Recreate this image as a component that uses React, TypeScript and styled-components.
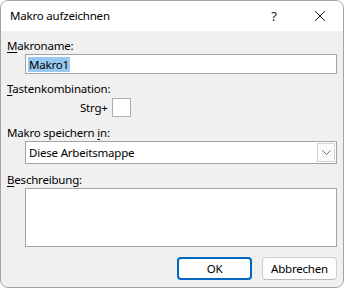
import React from "react";
import styled, { createGlobalStyle } from "styled-components";

const GlobalStyle = createGlobalStyle`
  html, body {
    margin: 0;
    padding: 0;
    background: #ffffff;
  }
  body {
    font-family: "Noto Sans", "Liberation Sans", sans-serif;
    font-size: 11.5px;
    letter-spacing: -0.2px;
    color: #000;
  }
`;

const Window = styled.div`
  width: 344px;
  height: 288px;
  box-sizing: border-box;
  border: 1px solid #a4a4a4;
  border-radius: 8px;
  overflow: hidden;
  display: flex;
  flex-direction: column;
  background: #f0f0f0;
`;

const TitleBar = styled.div`
  height: 30px;
  flex: none;
  background: #ffffff;
  display: flex;
  align-items: center;
  padding-left: 9px;
`;

const Title = styled.div`
  flex: 1;
  font-size: 11.5px;
  line-height: 16px;
`;

const TitleButton = styled.div<{ $w: number }>`
  width: ${(p) => p.$w}px;
  height: 30px;
  display: flex;
  align-items: center;
  justify-content: center;
  font-size: 13px;
  color: #1a1a1a;
`;

const Body = styled.div`
  flex: 1;
  display: flex;
  flex-direction: column;
  padding: 0 6px;
`;

const Label = styled.div<{ $top: number }>`
  margin-top: ${(p) => p.$top}px;
  line-height: 16px;
  white-space: nowrap;
`;

const Key = styled.span`
  text-decoration: underline;
  text-underline-offset: 2px;
`;

const Indented = styled.div`
  margin-left: 18px;
`;

const TextInput = styled.div`
  height: 20px;
  box-sizing: border-box;
  border: 1px solid #a3a3a3;
  background: #fff;
  display: flex;
  align-items: center;
  padding-left: 2px;
`;

const Selected = styled.span`
  background: #99c9ef;
  line-height: 15px;
  padding: 0 1px;
`;

const HotkeyRow = styled.div`
  display: flex;
  align-items: center;
  gap: 4px;
  margin-top: 1px;
  padding-left: 73px;
`;

const SmallBox = styled.div`
  width: 19px;
  height: 19px;
  box-sizing: border-box;
  border: 1px solid #adadad;
  background: #fff;
`;

const Select = styled.div`
  height: 23px;
  box-sizing: border-box;
  border: 1px solid #a3a3a3;
  background: #fff;
  display: flex;
  align-items: center;
  padding: 0 0 0 3px;
`;

const SelectValue = styled.div`
  flex: 1;
`;

const DropButton = styled.div`
  width: 18px;
  height: 19px;
  margin-right: 1px;
  box-sizing: border-box;
  border: 1px solid #d4d4d4;
  background: #fbfbfb;
  display: flex;
  align-items: center;
  justify-content: center;
`;

const TextArea = styled.div`
  height: 59px;
  box-sizing: border-box;
  border: 1px solid #a3a3a3;
  background: #fff;
`;

const Footer = styled.div`
  display: flex;
  justify-content: flex-end;
  gap: 10px;
  margin-top: 10px;
`;

const Button = styled.div<{ $primary?: boolean }>`
  width: 75px;
  height: 23px;
  box-sizing: border-box;
  border-radius: 4px;
  border: ${(p) => (p.$primary ? "2px solid #0067c0" : "1px solid #d0d0d0")};
  border-bottom-color: ${(p) => (p.$primary ? "#0067c0" : "#b8b8b8")};
  background: #fdfdfd;
  display: flex;
  align-items: center;
  justify-content: center;
  line-height: 16px;
`;

export default function App() {
  return (
    <>
      <GlobalStyle />
      <Window>
        <TitleBar>
          <Title>Makro aufzeichnen</Title>
          <TitleButton $w={46}>?</TitleButton>
          <TitleButton $w={46}>
            <svg width="12" height="12" viewBox="0 0 12 12">
              <path d="M1 1 L11 11 M11 1 L1 11" stroke="#1a1a1a" strokeWidth="1" />
            </svg>
          </TitleButton>
        </TitleBar>
        <Body>
          <Label $top={7}>
            <Key>M</Key>akroname:
          </Label>
          <Indented>
            <TextInput>
              <Selected>Makro1</Selected>
            </TextInput>
          </Indented>
          <Label $top={7}>
            <Key>T</Key>astenkombination:
          </Label>
          <HotkeyRow>
            <span>Strg+</span>
            <SmallBox />
          </HotkeyRow>
          <Label $top={8}>
            Makro speichern <Key>i</Key>n:
          </Label>
          <Indented>
            <Select>
              <SelectValue>Diese Arbeitsmappe</SelectValue>
              <DropButton>
                <svg width="9" height="5" viewBox="0 0 9 5">
                  <path d="M0.5 0.5 L4.5 4.5 L8.5 0.5" fill="none" stroke="#6d6d6d" strokeWidth="1" />
                </svg>
              </DropButton>
            </Select>
          </Indented>
          <Label $top={8}>
            <Key>B</Key>eschreibung:
          </Label>
          <Indented>
            <TextArea />
          </Indented>
          <Footer>
            <Button $primary>OK</Button>
            <Button>Abbrechen</Button>
          </Footer>
        </Body>
      </Window>
    </>
  );
}
